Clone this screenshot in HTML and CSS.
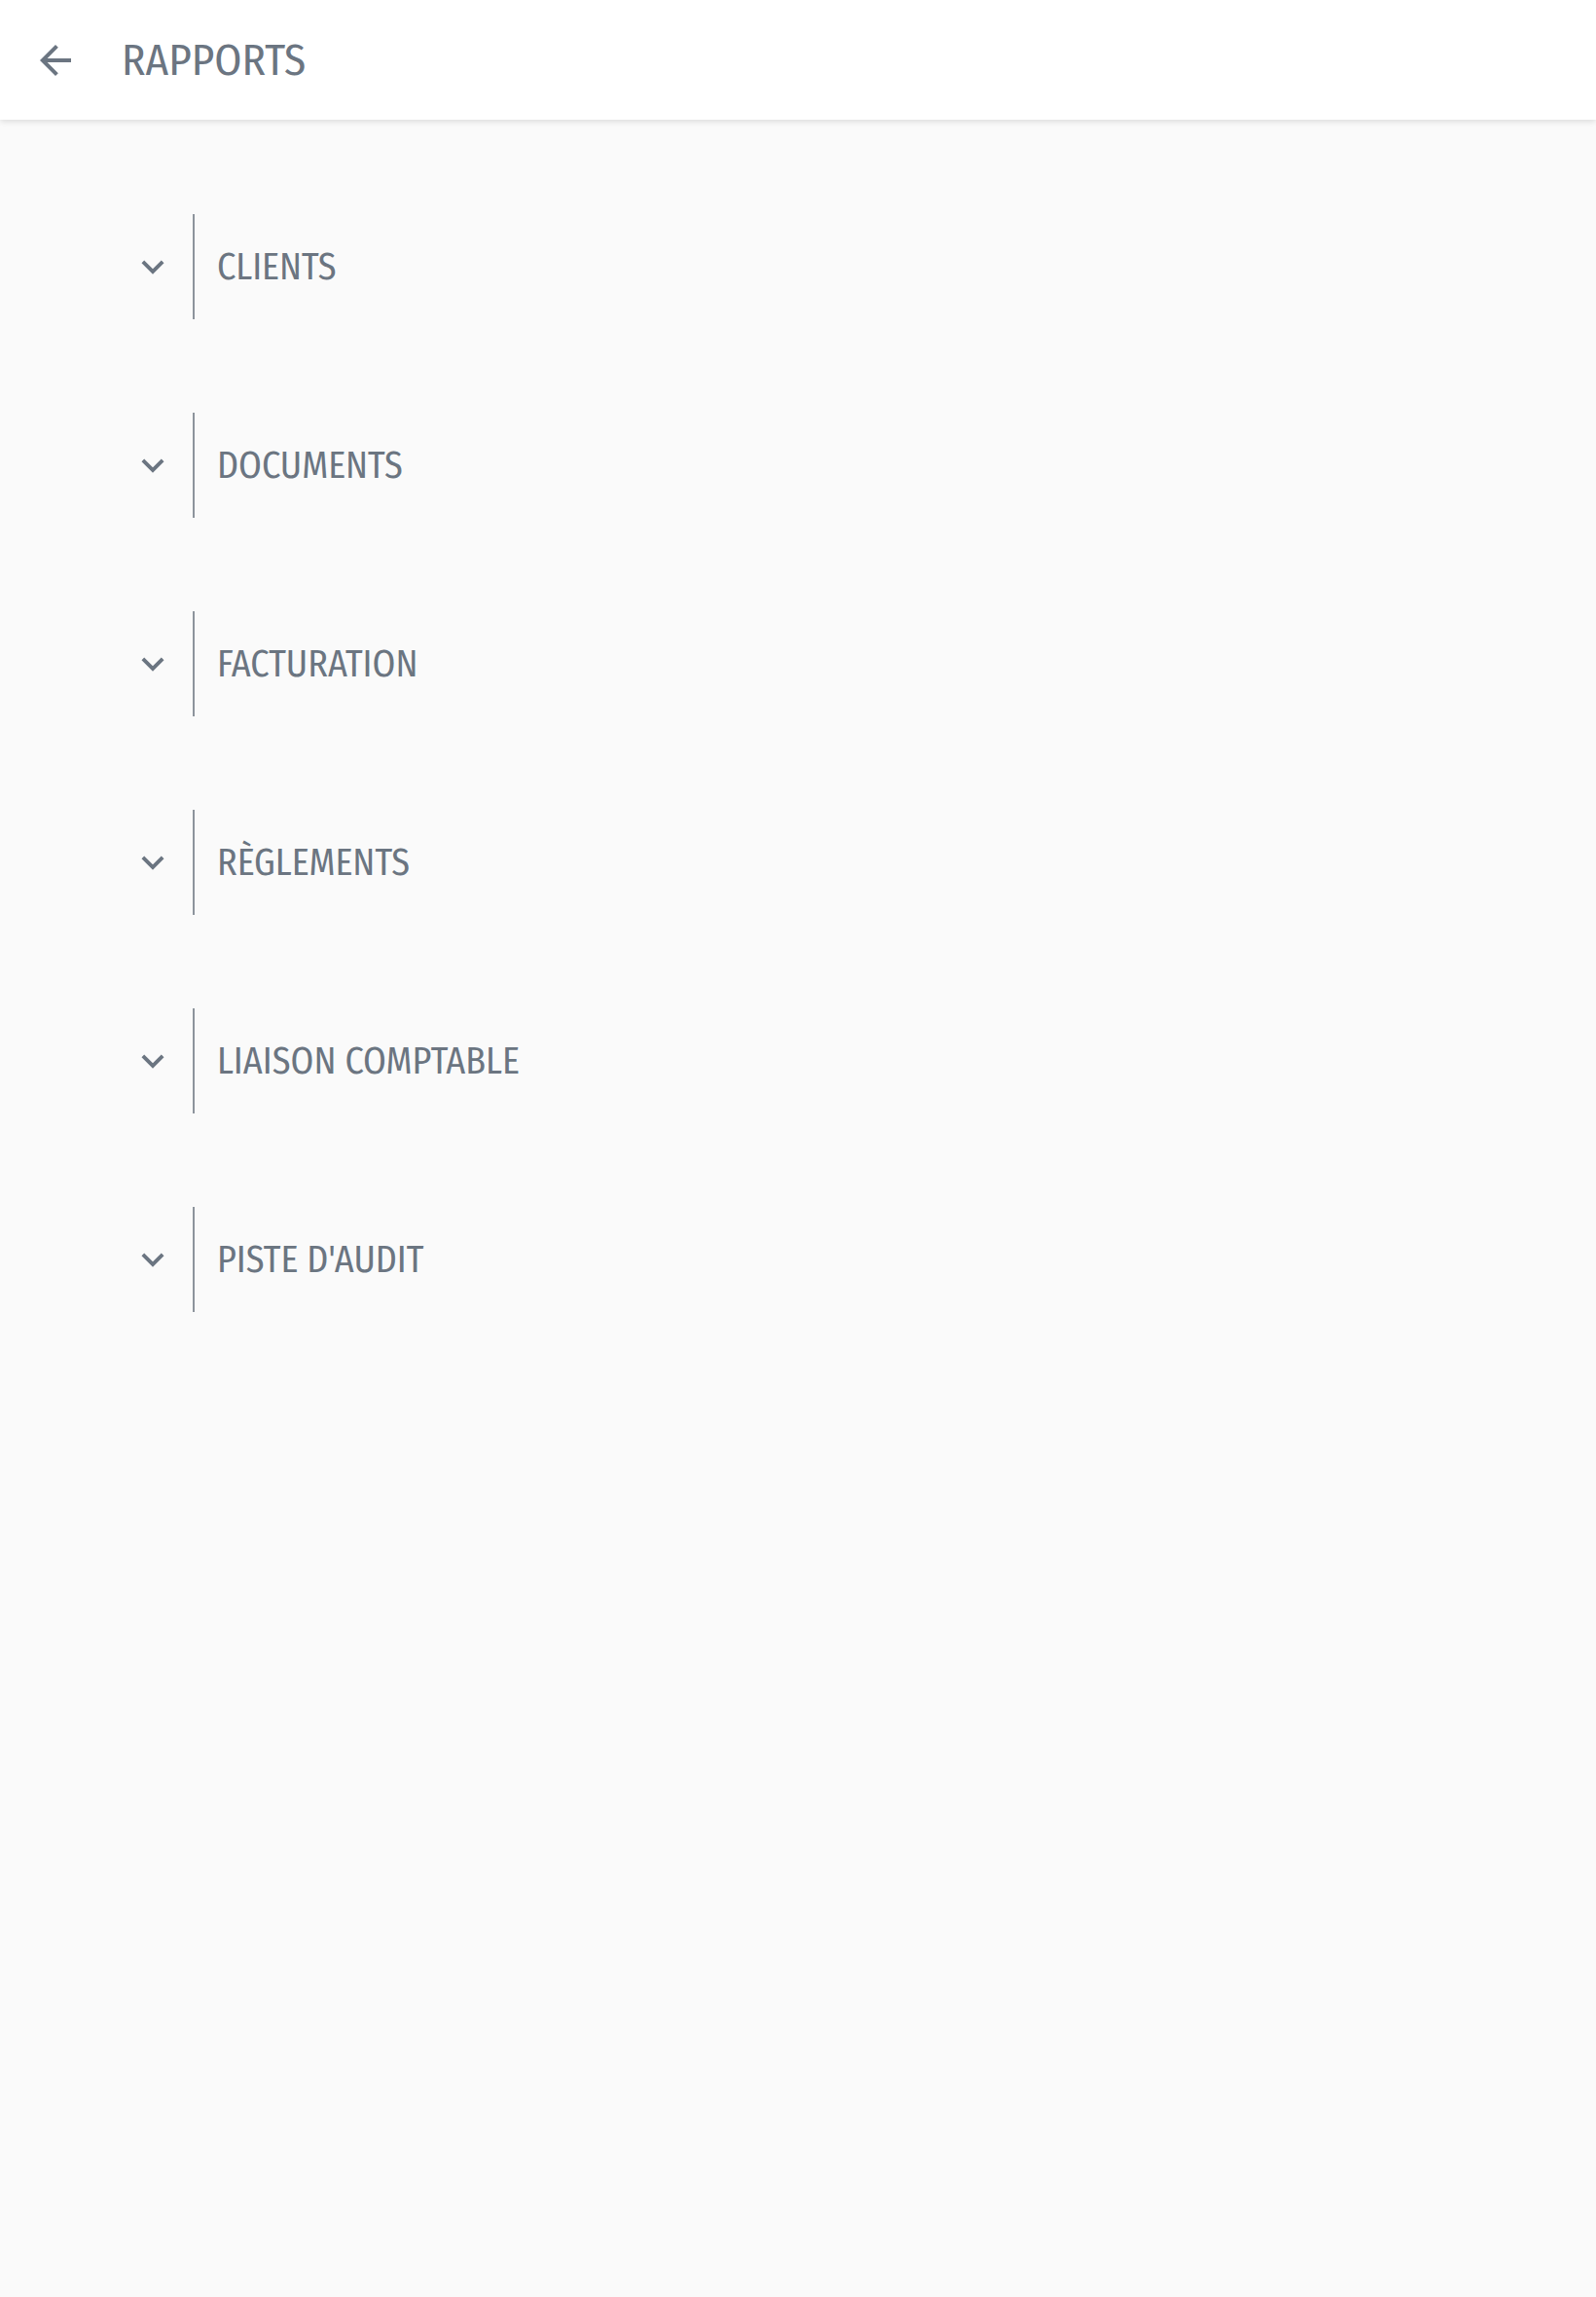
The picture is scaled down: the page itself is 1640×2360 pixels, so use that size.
FILE: index.html
```html
<!DOCTYPE html>
<html lang="fr">
<head>
    <meta charset="UTF-8">
    <meta name="viewport" content="width=device-width, initial-scale=1.0">
    <title>Rapports</title>
    <link rel="stylesheet" href="styles.css">
</head>
<body>
    <header class="topbar">
        <button class="back-btn" aria-label="Retour">
            <svg viewBox="0 0 24 24" width="48" height="48"><path d="M20 11H7.83l5.59-5.59L12 4l-8 8 8 8 1.41-1.41L7.83 13H20v-2z"/></svg>
        </button>
        <h1 class="title">RAPPORTS</h1>
    </header>

    <main class="reports">
        <!-- une section par groupe de rapports -->
        <div class="group">
            <button class="toggle"><svg viewBox="0 0 24 24" width="46" height="46"><path d="M16.59 8.59L12 13.17 7.41 8.59 6 10l6 6 6-6z"/></svg></button>
            <div class="group-label">CLIENTS</div>
        </div>
        <div class="group">
            <button class="toggle"><svg viewBox="0 0 24 24" width="46" height="46"><path d="M16.59 8.59L12 13.17 7.41 8.59 6 10l6 6 6-6z"/></svg></button>
            <div class="group-label">DOCUMENTS</div>
        </div>
        <div class="group">
            <button class="toggle"><svg viewBox="0 0 24 24" width="46" height="46"><path d="M16.59 8.59L12 13.17 7.41 8.59 6 10l6 6 6-6z"/></svg></button>
            <div class="group-label">FACTURATION</div>
        </div>
        <div class="group">
            <button class="toggle"><svg viewBox="0 0 24 24" width="46" height="46"><path d="M16.59 8.59L12 13.17 7.41 8.59 6 10l6 6 6-6z"/></svg></button>
            <div class="group-label">RÈGLEMENTS</div>
        </div>
        <div class="group">
            <button class="toggle"><svg viewBox="0 0 24 24" width="46" height="46"><path d="M16.59 8.59L12 13.17 7.41 8.59 6 10l6 6 6-6z"/></svg></button>
            <div class="group-label">LIAISON COMPTABLE</div>
        </div>
        <div class="group">
            <button class="toggle"><svg viewBox="0 0 24 24" width="46" height="46"><path d="M16.59 8.59L12 13.17 7.41 8.59 6 10l6 6 6-6z"/></svg></button>
            <div class="group-label">PISTE D'AUDIT</div>
        </div>
    </main>
</body>
</html>
```

FILE: styles.css
```css
body {
    margin: 0;
    padding: 0;
    background-color: #fafafa;
    font-family: "Fira Sans Condensed", "Roboto Condensed", "Open Sans", sans-serif;
    font-stretch: 75%;
    color: #6b7581;
    min-height: 2360px;
}

.topbar {
    height: 123px;
    display: flex;
    align-items: center;
    background-color: #ffffff;
    box-shadow: 0 2px 6px rgba(0, 0, 0, 0.12);
}

.back-btn {
    margin-left: 33px;
    width: 48px;
    height: 48px;
    padding: 0;
    border: none;
    background: none;
    fill: #6b7581;
}

.back-btn svg {
    display: block;
}

.title {
    margin: 0 0 0 44px;
    font-size: 45px;
    font-weight: 400;
}

.reports {
    padding: 97px 0 0 134px;
    display: flex;
    flex-direction: column;
    gap: 96px;
}

.group {
    display: flex;
    align-items: center;
    height: 108px;
}

.toggle {
    width: 46px;
    height: 46px;
    padding: 0;
    border: none;
    background: none;
    fill: #6b7581;
    margin-right: 18px;
}

.toggle svg {
    display: block;
}

.group-label {
    height: 100%;
    display: flex;
    align-items: center;
    border-left: 2px solid #8d949c;
    padding-left: 23px;
    font-size: 38px;
}
```
